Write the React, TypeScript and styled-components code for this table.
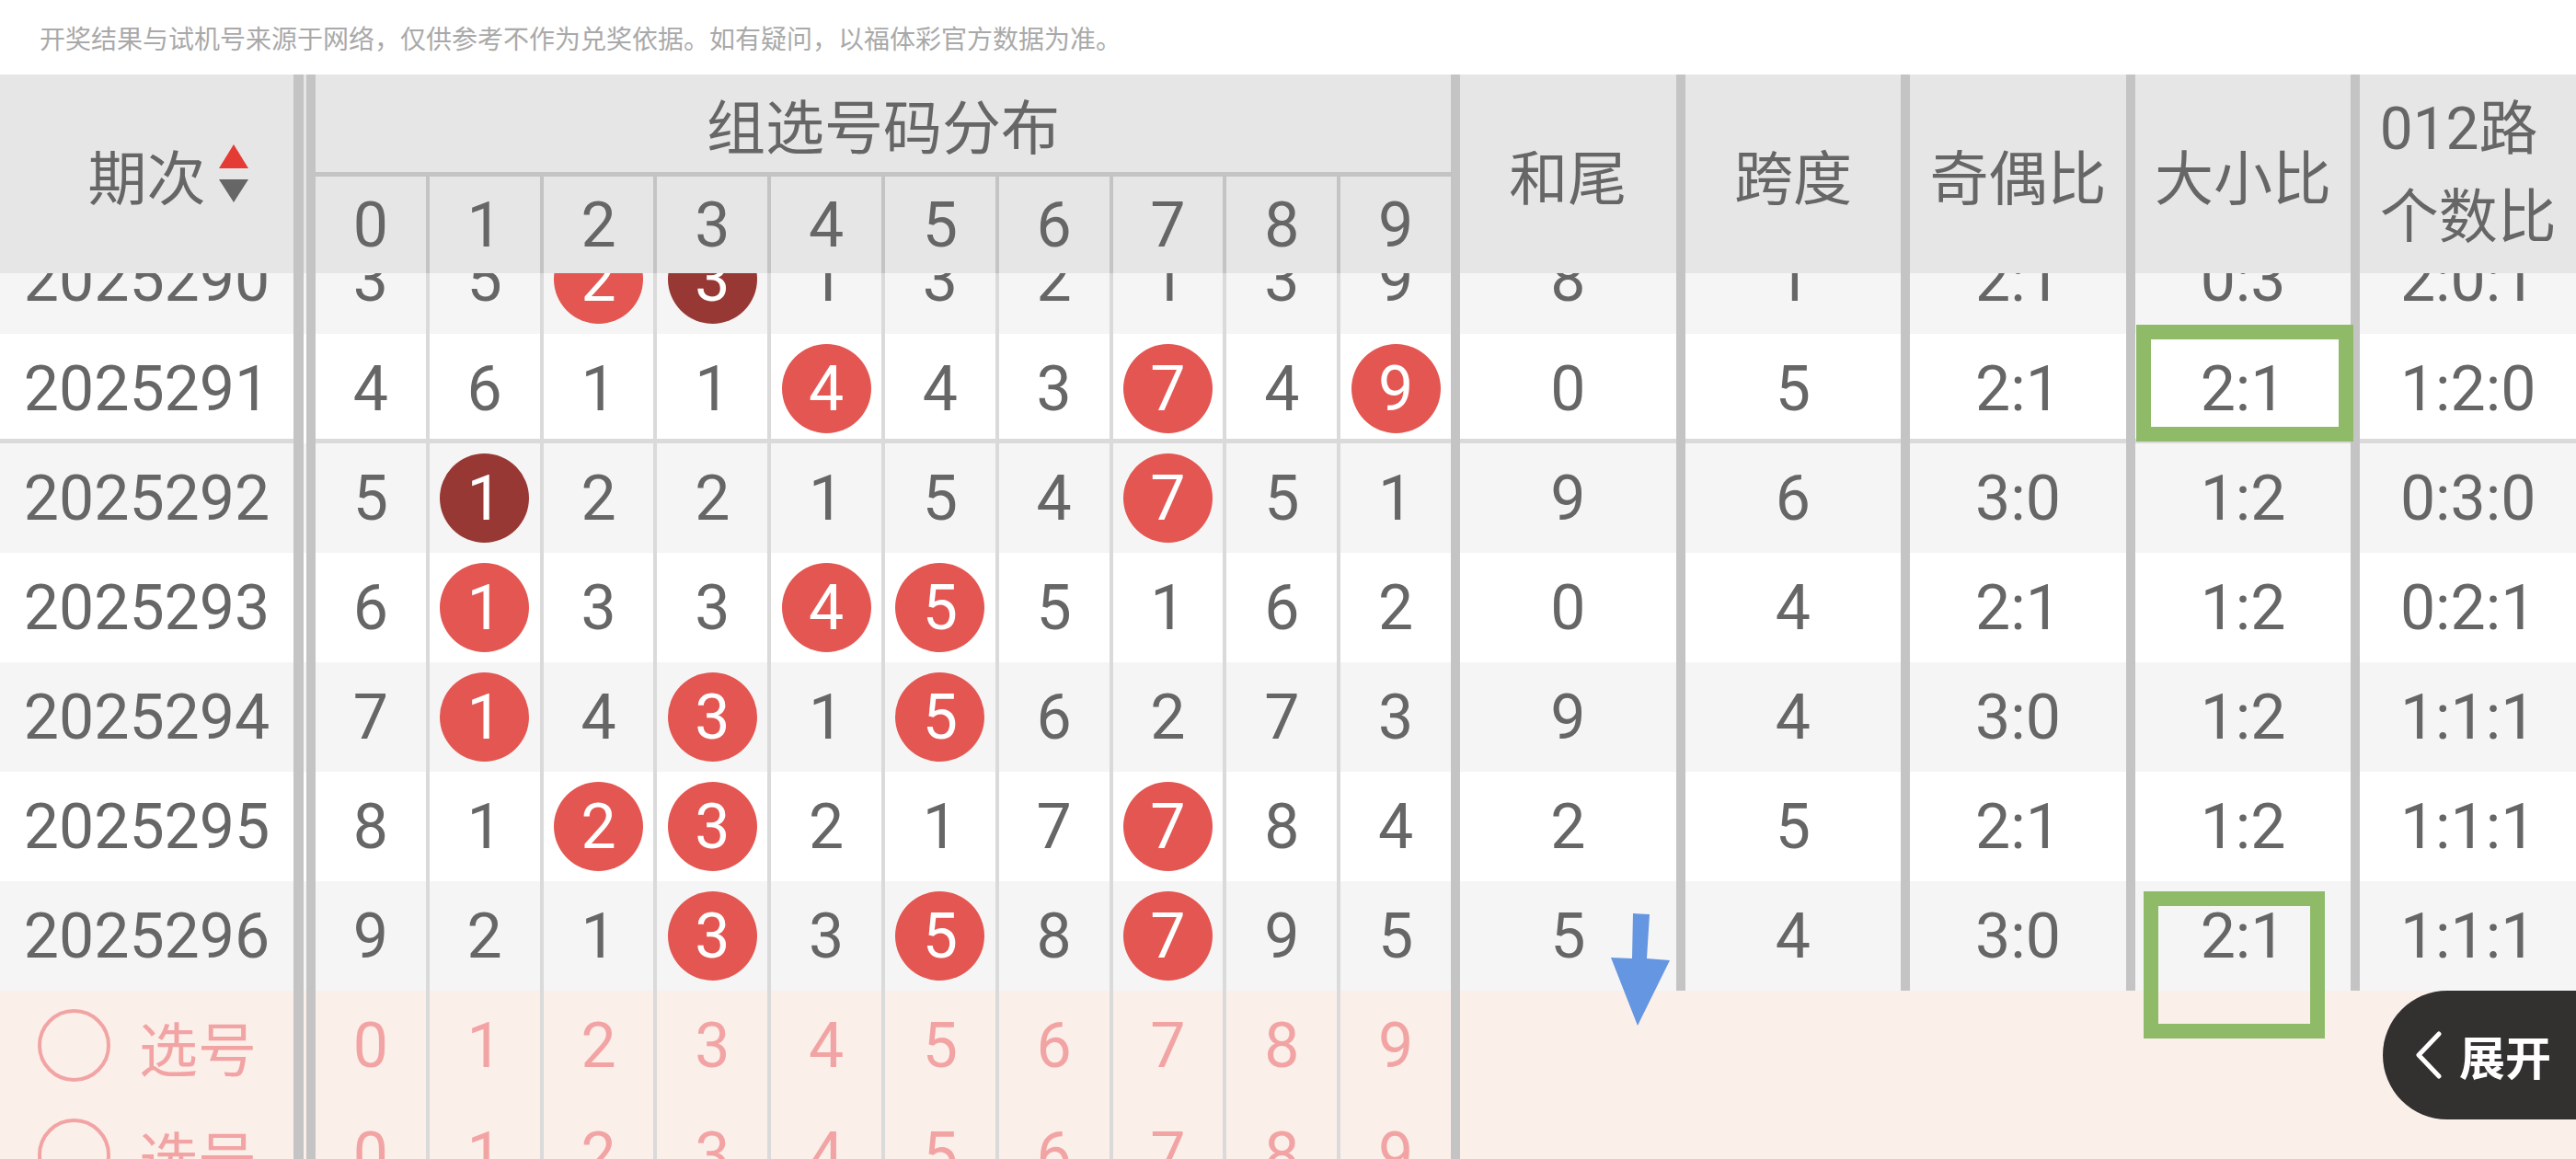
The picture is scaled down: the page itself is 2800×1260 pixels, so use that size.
import React from 'react';
import styled, { createGlobalStyle } from 'styled-components';

const FONT = `Roboto, "Noto Sans CJK SC", "Noto Sans", sans-serif`;

const GlobalStyle = createGlobalStyle`
  html, body { margin: 0; padding: 0; background: #fff; }
  body { font-family: ${FONT}; }
  #root { width: 2800px; height: 1260px; }
`;

const LINE = '#c4c4c4';
const THIN = '#dadada';
const TEXT = '#666666';
const PINK = '#f2a4a4';
const PINK_BG = '#fbefea';

const Page = styled.div`
  position: relative;
  width: 2800px;
  height: 1260px;
  overflow: hidden;
  display: flex;
  flex-direction: column;
  background: #fff;
  font-family: ${FONT};
  color: ${TEXT};
`;

const Notice = styled.div`
  flex: none;
  height: 81px;
  display: flex;
  align-items: center;
  padding-left: 43px;
  font-family: "Noto Sans CJK SC", sans-serif;
  font-size: 28px;
  color: #a9a9a9;
`;

/* ---------- header ---------- */
const Header = styled.div`
  flex: none;
  display: flex;
  height: 216px;
  background: #e6e6e6;
`;

const IssueHead = styled.div`
  flex: none;
  width: 330px;
  box-sizing: border-box;
  border-right: 11px solid ${LINE};
  margin-right: 3px;
  display: flex;
  align-items: center;
  justify-content: center;
  font-size: 64px;
`;

const SortLabel = styled.span`
  position: relative;
  display: inline-block;
`;

const SortIcon = styled.svg`
  position: absolute;
  left: calc(100% + 14px);
  top: 50%;
  transform: translateY(-50%);
  width: 32px;
  height: 64px;
`;

const GroupHead = styled.div`
  flex: none;
  width: 1254px;
  box-sizing: border-box;
  border-left: 10px solid ${LINE};
  border-right: 10px solid ${LINE};
  display: flex;
  flex-direction: column;
`;

const GroupTitle = styled.div`
  height: 106px;
  border-bottom: 5px solid ${LINE};
  display: flex;
  align-items: center;
  justify-content: center;
  font-size: 64px;
`;

const SubRow = styled.div`
  flex: 1;
  display: flex;
`;

const SubCell = styled.div`
  flex: 1;
  display: flex;
  align-items: center;
  justify-content: center;
  font-size: 68px;
  & + & {
    border-left: 4px solid ${LINE};
  }
`;

const StatsHead = styled.div`
  flex: 1;
  display: flex;
`;

const StatHead = styled.div`
  flex: 1;
  display: flex;
  align-items: center;
  justify-content: center;
  font-size: 64px;
  & + & {
    border-left: 10px solid ${LINE};
  }
`;

const TwoLine = styled.span`
  display: inline-block;
  text-align: left;
  line-height: 96px;
`;

/* ---------- body ---------- */
const Body = styled.div`
  flex: 1;
  overflow: hidden;
`;

const Rows = styled.div`
  margin-top: -53px;
`;

const Row = styled.div<{ $bg: string; $sep?: boolean }>`
  display: flex;
  height: 119px;
  background: ${(p) => p.$bg};
  & > * {
    box-shadow: ${(p) => (p.$sep ? `inset 0 -5px 0 ${THIN}` : 'none')};
  }
`;

const IssueCell = styled.div<{ $pick?: boolean }>`
  flex: none;
  width: 330px;
  box-sizing: border-box;
  border-right: 11px solid ${LINE};
  margin-right: 3px;
  display: flex;
  align-items: center;
  justify-content: ${(p) => (p.$pick ? 'flex-start' : 'center')};
  padding-left: ${(p) => (p.$pick ? '41px' : '0')};
  gap: 31px;
  font-size: ${(p) => (p.$pick ? '64px' : '68px')};
  color: ${(p) => (p.$pick ? PINK : TEXT)};
`;

const Radio = styled.span`
  flex: none;
  width: 79px;
  height: 79px;
  box-sizing: border-box;
  border: 4px solid ${PINK};
  border-radius: 50%;
`;

const NumGroup = styled.div`
  flex: none;
  width: 1254px;
  box-sizing: border-box;
  border-left: 10px solid ${LINE};
  border-right: 10px solid ${LINE};
  display: flex;
`;

const NumCell = styled.div<{ $pick?: boolean }>`
  flex: 1;
  display: flex;
  align-items: center;
  justify-content: center;
  font-size: 68px;
  color: ${(p) => (p.$pick ? PINK : TEXT)};
  & + & {
    border-left: 4px solid ${THIN};
  }
`;

const Ball = styled.span<{ $dark?: boolean }>`
  width: 97px;
  height: 97px;
  border-radius: 50%;
  background: ${(p) => (p.$dark ? '#983834' : '#e45651')};
  color: #fff;
  display: flex;
  align-items: center;
  justify-content: center;
`;

const StatGroup = styled.div`
  flex: 1;
  display: flex;
`;

const StatCell = styled.div`
  flex: 1;
  display: flex;
  align-items: center;
  justify-content: center;
  font-size: 68px;
  & + & {
    border-left: 10px solid ${LINE};
  }
`;

const Blank = styled.div`
  flex: 1;
`;

/* ---------- overlays ---------- */
const Mark = styled.div<{ $l: number; $t: number; $w: number; $h: number }>`
  position: absolute;
  left: ${(p) => p.$l}px;
  top: ${(p) => p.$t}px;
  width: ${(p) => p.$w}px;
  height: ${(p) => p.$h}px;
  box-sizing: border-box;
  border: 16px solid #8fbb69;
  pointer-events: none;
`;

const Arrow = styled.svg`
  position: absolute;
  left: 1745px;
  top: 985px;
  width: 80px;
  height: 140px;
`;

const Expand = styled.div`
  position: absolute;
  right: 0;
  top: 1077px;
  width: 210px;
  height: 140px;
  box-sizing: border-box;
  border-radius: 70px 0 0 70px;
  background: #33312f;
  color: #fff;
  display: flex;
  align-items: center;
  padding-left: 35px;
  gap: 18px;
  font-family: "Noto Sans CJK SC", sans-serif;
  font-weight: 700;
  font-size: 50px;
`;

const Chevron = styled.svg`
  width: 30px;
  height: 52px;
  flex: none;
`;

type RowData = {
  issue: string;
  nums: number[];
  balls: number[];
  dark: number[];
  stats: string[];
};

const data: RowData[] = [
  { issue: '2025290', nums: [3, 5, 0, 0, 1, 3, 2, 1, 3, 9], balls: [2], dark: [3], stats: ['8', '1', '2:1', '0:3', '2:0:1'] },
  { issue: '2025291', nums: [4, 6, 1, 1, 0, 4, 3, 0, 4, 0], balls: [4, 7, 9], dark: [], stats: ['0', '5', '2:1', '2:1', '1:2:0'] },
  { issue: '2025292', nums: [5, 0, 2, 2, 1, 5, 4, 0, 5, 1], balls: [7], dark: [1], stats: ['9', '6', '3:0', '1:2', '0:3:0'] },
  { issue: '2025293', nums: [6, 0, 3, 3, 0, 0, 5, 1, 6, 2], balls: [1, 4, 5], dark: [], stats: ['0', '4', '2:1', '1:2', '0:2:1'] },
  { issue: '2025294', nums: [7, 0, 4, 0, 1, 0, 6, 2, 7, 3], balls: [1, 3, 5], dark: [], stats: ['9', '4', '3:0', '1:2', '1:1:1'] },
  { issue: '2025295', nums: [8, 1, 0, 0, 2, 1, 7, 0, 8, 4], balls: [2, 3, 7], dark: [], stats: ['2', '5', '2:1', '1:2', '1:1:1'] },
  { issue: '2025296', nums: [9, 2, 1, 0, 3, 0, 8, 0, 9, 5], balls: [3, 5, 7], dark: [], stats: ['5', '4', '3:0', '2:1', '1:1:1'] },
];

const digits = [0, 1, 2, 3, 4, 5, 6, 7, 8, 9];

export default function App() {
  return (
    <>
      <GlobalStyle />
      <Page>
        <Notice>开奖结果与试机号来源于网络，仅供参考不作为兑奖依据。如有疑问，以福体彩官方数据为准。</Notice>

        <Header>
          <IssueHead>
            <SortLabel>
              期次
              <SortIcon viewBox="0 0 32 64">
                <polygon points="16,0 0,26 32,26" fill="#e53b35" />
                <polygon points="0,38 32,38 16,63" fill="#666666" />
              </SortIcon>
            </SortLabel>
          </IssueHead>
          <GroupHead>
            <GroupTitle>组选号码分布</GroupTitle>
            <SubRow>
              {digits.map((d) => (
                <SubCell key={d}>{d}</SubCell>
              ))}
            </SubRow>
          </GroupHead>
          <StatsHead>
            <StatHead>和尾</StatHead>
            <StatHead>跨度</StatHead>
            <StatHead>奇偶比</StatHead>
            <StatHead>大小比</StatHead>
            <StatHead>
              <TwoLine>
                012路
                <br />
                个数比
              </TwoLine>
            </StatHead>
          </StatsHead>
        </Header>

        <Body>
          <Rows>
            {data.map((r, i) => (
              <Row key={r.issue} $bg={i % 2 === 0 ? '#f5f5f5' : '#ffffff'} $sep={r.issue === '2025291'}>
                <IssueCell>{r.issue}</IssueCell>
                <NumGroup>
                  {r.nums.map((n, c) => (
                    <NumCell key={c}>
                      {r.dark.includes(c) ? (
                        <Ball $dark>{c}</Ball>
                      ) : r.balls.includes(c) ? (
                        <Ball>{c}</Ball>
                      ) : (
                        n
                      )}
                    </NumCell>
                  ))}
                </NumGroup>
                <StatGroup>
                  {r.stats.map((s, k) => (
                    <StatCell key={k}>{s}</StatCell>
                  ))}
                </StatGroup>
              </Row>
            ))}
            {[0, 1].map((k) => (
              <Row key={`pick${k}`} $bg={PINK_BG}>
                <IssueCell $pick>
                  <Radio />
                  <span>选号</span>
                </IssueCell>
                <NumGroup>
                  {digits.map((d) => (
                    <NumCell key={d} $pick>
                      {d}
                    </NumCell>
                  ))}
                </NumGroup>
                <Blank />
              </Row>
            ))}
          </Rows>
        </Body>

        <Mark $l={2322} $t={353} $w={236} $h={127} />
        <Mark $l={2330} $t={969} $w={197} $h={160} />

        <Arrow viewBox="0 0 80 140">
          <polygon points="30,8 48,9 45,57 70,59 35,130 6,56 29,57" fill="#6596e2" />
        </Arrow>

        <Expand>
          <Chevron viewBox="0 0 30 52">
            <polyline
              points="26,3 4,26 26,49"
              fill="none"
              stroke="#fff"
              strokeWidth="5"
              strokeLinecap="round"
              strokeLinejoin="round"
            />
          </Chevron>
          <span>展开</span>
        </Expand>
      </Page>
    </>
  );
}
